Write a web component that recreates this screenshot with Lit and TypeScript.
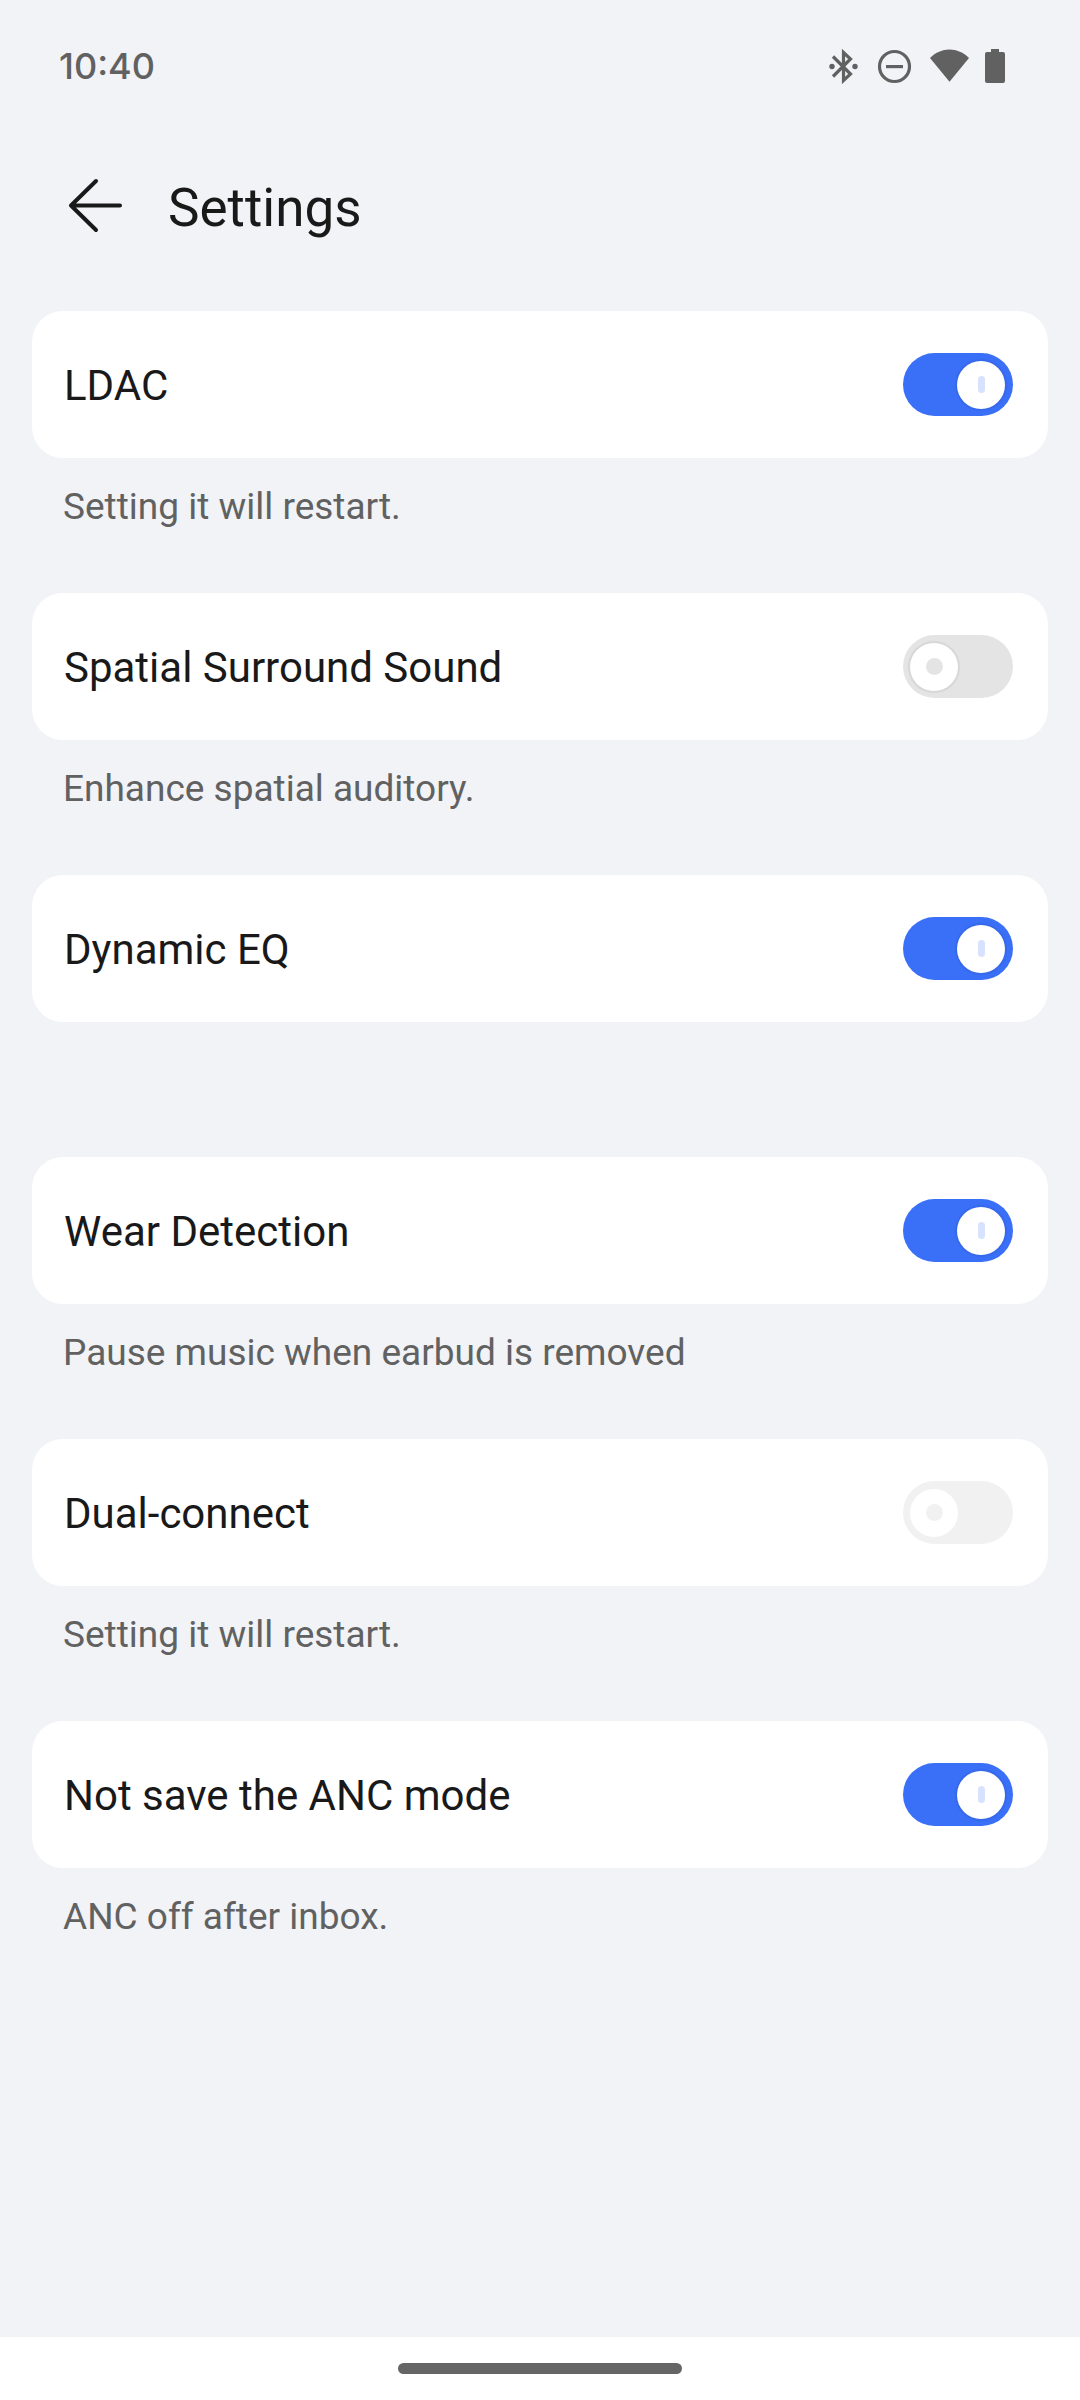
import { LitElement, html, css, nothing } from "lit";
import { customElement, property, state } from "lit/decorators.js";

interface Setting {
  id: string;
  label: string;
  hint: string;
  on: boolean;
  disabled?: boolean;
}

@customElement("status-bar")
class StatusBar extends LitElement {
  static styles = css`
    :host {
      display: flex;
      align-items: center;
      justify-content: space-between;
      height: 132px;
      padding: 0 75px 0 59px;
      color: #616161;
      box-sizing: border-box;
    }
    .time {
      font: 500 36px/44px Inter, Roboto, sans-serif;
    }
    .icons {
      display: block;
      width: 176px;
      height: 36px;
    }
  `;

  render() {
    return html`
      <span class="time">10:40</span>
      <svg class="icons" viewBox="829 48 176 36" fill="currentColor" aria-hidden="true">
        <path
          fill="none"
          stroke="currentColor"
          stroke-width="3.200"
          d="M833 56.500 850.500 74 843.500 80.500V52.500L850.500 59 833 76.500"
        />
        <circle cx="832" cy="66.500" r="2.700" />
        <circle cx="855" cy="66.500" r="2.700" />
        <circle cx="894.500" cy="66.500" r="15" fill="none" stroke="currentColor" stroke-width="3.200" />
        <path d="M886 65h17v3.200h-17z" />
        <path d="M930 58C941 46.500 958 46.500 969 58L949.500 81.800Z" />
        <path d="M991 49h8v3h4a2 2 0 0 1 2 2v27a2 2 0 0 1-2 2h-16a2 2 0 0 1-2-2V54a2 2 0 0 1 2-2h4z" />
      </svg>
    `;
  }
}

@customElement("setting-row")
class SettingRow extends LitElement {
  @property({ attribute: false }) setting!: Setting;

  static styles = css`
    :host {
      display: block;
    }
    .card {
      display: flex;
      align-items: center;
      justify-content: space-between;
      gap: 32px;
      min-height: 147px;
      padding: 0 35px 0 32px;
      border-radius: 31px;
      background: #fff;
      box-sizing: border-box;
    }
    .label {
      flex: 1;
      padding-top: 2px;
      color: #191919;
      font-size: 42px;
      line-height: 50px;
    }
    .hint {
      min-height: 135px;
      margin: 0;
      padding: 27px 31px 0;
      color: #616161;
      font-size: 37px;
      line-height: 44px;
      box-sizing: border-box;
    }
    .switch {
      appearance: none;
      display: grid;
      flex: none;
      align-items: center;
      justify-content: start;
      width: 110px;
      height: 63px;
      margin: 0;
      padding: 0 7px;
      border-radius: 32px;
      background: #e4e4e4;
      box-sizing: border-box;
    }
    .switch::before,
    .switch::after {
      content: "";
      grid-area: 1 / 1;
      justify-self: center;
    }
    .switch::before {
      width: 48px;
      height: 48px;
      border-radius: 50%;
      background: #fff;
      box-shadow: 0 0 1px 2px rgba(0, 0, 0, 0.06);
    }
    .switch::after {
      width: 17px;
      height: 17px;
      border-radius: 9px;
      background: #e4e4e4;
    }
    .switch:checked {
      justify-content: end;
      padding: 0 8px;
      background: #3a6ff8;
    }
    .switch:checked::after {
      width: 7px;
      background: #d8e2fe;
    }
    .switch:disabled {
      background: #f1f1f1;
    }
    .switch:disabled::before {
      box-shadow: none;
    }
    .switch:disabled::after {
      background: #f1f1f1;
    }
  `;

  private toggle(e: Event) {
    const on = (e.target as HTMLInputElement).checked;
    this.dispatchEvent(new CustomEvent("setting-change", { detail: { id: this.setting.id, on } }));
  }

  render() {
    const { id, label, hint, on, disabled } = this.setting;
    return html`
      <div class="card">
        <label class="label" for=${id}>${label}</label>
        <input
          class="switch"
          id=${id}
          type="checkbox"
          role="switch"
          aria-describedby=${hint ? "hint" : nothing}
          .checked=${on}
          ?disabled=${disabled}
          @change=${this.toggle}
        />
      </div>
      <p class="hint" id="hint">${hint}</p>
    `;
  }
}

@customElement("app-root")
class AppRoot extends LitElement {
  @state() private settings: Setting[] = [
    { id: "ldac", label: "LDAC", hint: "Setting it will restart.", on: true },
    { id: "spatial", label: "Spatial Surround Sound", hint: "Enhance spatial auditory.", on: false },
    { id: "eq", label: "Dynamic EQ", hint: "", on: true },
    { id: "wear", label: "Wear Detection", hint: "Pause music when earbud is removed", on: true },
    { id: "dual", label: "Dual-connect", hint: "Setting it will restart.", on: false, disabled: true },
    { id: "anc", label: "Not save the ANC mode", hint: "ANC off after inbox.", on: true },
  ];

  static styles = css`
    :host {
      display: flex;
      flex-direction: column;
      min-height: 100vh;
      background: #f1f3f7;
      font-family: Roboto, sans-serif;
    }
    .header {
      display: flex;
      align-items: center;
      gap: 40px;
      height: 147px;
      padding: 0 64px;
    }
    .back {
      display: block;
      padding: 0;
      border: 0;
      background: none;
      color: #191919;
    }
    .arrow {
      display: block;
      width: 64px;
      height: 64px;
    }
    .title {
      margin: 0;
      padding-top: 4px;
      color: #191919;
      font-size: 53px;
      font-weight: 400;
      line-height: 64px;
    }
    .list {
      flex: 1;
      padding: 32px 32px 0;
    }
    .nav {
      display: flex;
      align-items: center;
      justify-content: center;
      height: 63px;
      background: #fff;
    }
    .pill {
      width: 284px;
      height: 11px;
      border-radius: 6px;
      background: #666;
    }
  `;

  private applyChange(e: CustomEvent<{ id: string; on: boolean }>) {
    const { id, on } = e.detail;
    this.settings = this.settings.map((s) => (s.id === id ? { ...s, on } : s));
  }

  render() {
    return html`
      <status-bar></status-bar>
      <header class="header">
        <button class="back" type="button" aria-label="Back">
          <svg
            class="arrow"
            viewBox="0 0 64 64"
            fill="none"
            stroke="currentColor"
            stroke-width="4"
            stroke-linecap="round"
            stroke-linejoin="round"
            aria-hidden="true"
          >
            <path d="M32 7 7 31.500 32 56M7 31.500H56" />
          </svg>
        </button>
        <h1 class="title">Settings</h1>
      </header>
      <main class="list">
        ${this.settings.map(
          (s) => html`<setting-row .setting=${s} @setting-change=${this.applyChange}></setting-row>`
        )}
      </main>
      <footer class="nav"><div class="pill"></div></footer>
    `;
  }
}
